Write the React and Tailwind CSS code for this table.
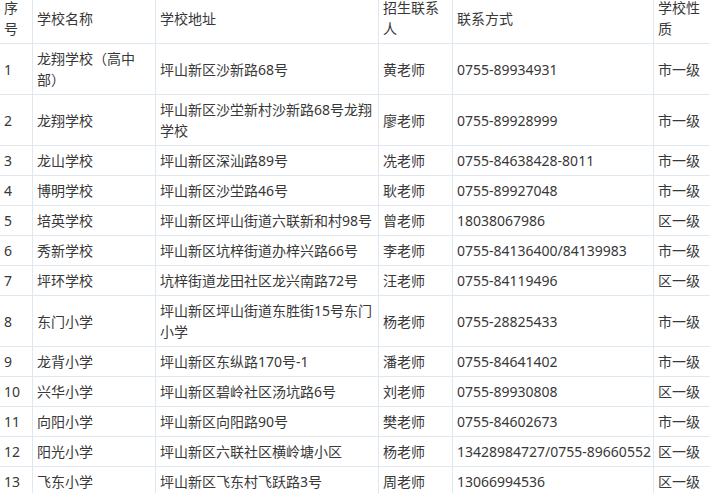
import React from "react";

const rows = [
  ["1", "龙翔学校（高中部）", "坪山新区沙新路68号", "黄老师", "0755-89934931", "市一级"],
  ["2", "龙翔学校", "坪山新区沙坣新村沙新路68号龙翔学校", "廖老师", "0755-89928999", "市一级"],
  ["3", "龙山学校", "坪山新区深汕路89号", "冼老师", "0755-84638428-8011", "市一级"],
  ["4", "博明学校", "坪山新区沙坣路46号", "耿老师", "0755-89927048", "市一级"],
  ["5", "培英学校", "坪山新区坪山街道六联新和村98号", "曾老师", "18038067986", "区一级"],
  ["6", "秀新学校", "坪山新区坑梓街道办梓兴路66号", "李老师", "0755-84136400/84139983", "市一级"],
  ["7", "坪环学校", "坑梓街道龙田社区龙兴南路72号", "汪老师", "0755-84119496", "区一级"],
  ["8", "东门小学", "坪山新区坪山街道东胜街15号东门小学", "杨老师", "0755-28825433", "市一级"],
  ["9", "龙背小学", "坪山新区东纵路170号-1", "潘老师", "0755-84641402", "市一级"],
  ["10", "兴华小学", "坪山新区碧岭社区汤坑路6号", "刘老师", "0755-89930808", "区一级"],
  ["11", "向阳小学", "坪山新区向阳路90号", "樊老师", "0755-84602673", "市一级"],
  ["12", "阳光小学", "坪山新区六联社区横岭塘小区", "杨老师", "13428984727/0755-89660552", "区一级"],
  ["13", "飞东小学", "坪山新区飞东村飞跃路3号", "周老师", "13066994536", "区一级"],
];

const head = ["序号", "学校名称", "学校地址", "招生联系人", "联系方式", "学校性质"];

const cell = "border border-[#dfe8f1] px-[4px] py-[4px] align-middle text-left font-normal";

export default function App() {
  return (
    <div
      className="w-[710px] h-[493px] overflow-hidden bg-white text-[#383838] text-[14px] leading-[21px] [text-spacing-trim:space-all]"
      style={{ fontFamily: '"Noto Sans", "Noto Sans CJK SC", sans-serif' }}
    >
      {/* header row is cut at the top, as in the screenshot */}
      <table className="table-fixed border-collapse w-[714px] -ml-[1px] -mt-[8px]">
        <colgroup>
          <col className="w-[33px]" />
          <col className="w-[123px]" />
          <col className="w-[223px]" />
          <col className="w-[74px]" />
          <col className="w-[201px]" />
          <col className="w-[60px]" />
        </colgroup>
        <thead>
          <tr>
            {head.map((h) => (
              <th key={h} className={cell}>
                {h}
              </th>
            ))}
          </tr>
        </thead>
        <tbody>
          {rows.map((r) => (
            <tr key={r[0]}>
              {r.map((c, i) => (
                <td key={i} className={cell + (i === 4 ? " whitespace-nowrap" : "")}>
                  {c}
                </td>
              ))}
            </tr>
          ))}
        </tbody>
      </table>
    </div>
  );
}
